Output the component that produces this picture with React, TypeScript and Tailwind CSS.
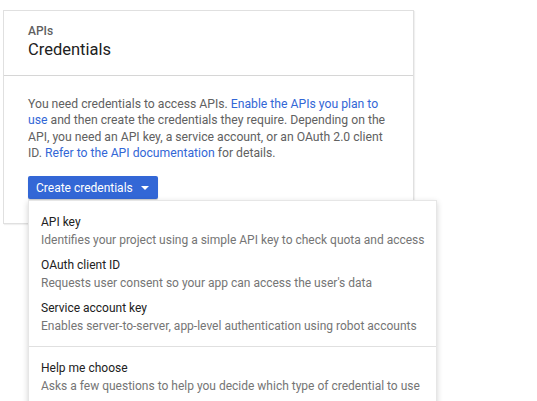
const items = [
  { title: 'API key', desc: 'Identifies your project using a simple API key to check quota and access' },
  { title: 'OAuth client ID', desc: "Requests user consent so your app can access the user's data" },
  { title: 'Service account key', desc: 'Enables server-to-server, app-level authentication using robot accounts' },
];

function MenuItem({ title, desc }: { title: string; desc: string }) {
  return (
    <div className="px-[12px] pt-[4px] pb-[3px] cursor-pointer hover:bg-[#f1f1f1]">
      <div className="text-[12px] leading-[18px] text-[#212121]">{title}</div>
      <div className="text-[12px] leading-[18px] text-[#757575] whitespace-nowrap">{desc}</div>
    </div>
  );
}

export default function App() {
  return (
    <div className="relative w-[537px] h-[401px] overflow-hidden bg-white font-['Roboto','Liberation_Sans',sans-serif]">
      <div className="ml-[3px] mt-[10px] w-[411px] border border-[#e0e0e0] bg-white shadow-[1px_1px_1px_rgba(0,0,0,0.06)]">
        {/* Header */}
        <div className="px-6 pt-3 pb-[14px] border-b border-[#d6d6d6]">
          <div className="text-[12px] leading-[16px] font-medium text-[#5f5f5f]">APIs</div>
          <div className="text-[16.5px] leading-[22px] text-[#212121]">Credentials</div>
        </div>

        {/* Body */}
        <div className="px-6 pt-5 pb-6">
          <p className="text-[12.2px] leading-[16.33px] text-[#616161]">
            You need credentials to access APIs.{' '}
            <a className="text-[#3367d6]">Enable the APIs you plan to use</a> and then create the
            credentials they require. Depending on the API, you need an API key, a service account,
            or an OAuth 2.0 client ID.{' '}
            <a className="text-[#3367d6]">Refer to the API documentation</a> for details.
          </p>
          <button className="mt-[15px] h-[23px] flex items-center pl-2 pr-[9px] bg-[#3367d6] text-white text-[12px] rounded-[2px] shadow-[0_1px_1px_rgba(0,0,0,0.2)]">
            Create credentials
            <svg width="8" height="4" viewBox="0 0 8 4" className="ml-[8px]">
              <path d="M0 0 L8 0 L4 4 Z" fill="#fff" />
            </svg>
          </button>
        </div>
      </div>

      {/* Dropdown menu */}
      <div className="absolute left-[28px] top-[200px] w-[409px] bg-white border border-[#e6e6e6] shadow-[0_2px_6px_rgba(0,0,0,0.18)] py-2">
        {items.map((it) => (
          <MenuItem key={it.title} {...it} />
        ))}
        <div className="my-2 border-t border-[#e0e0e0]" />
        <MenuItem title="Help me choose" desc="Asks a few questions to help you decide which type of credential to use" />
      </div>
    </div>
  );
}
